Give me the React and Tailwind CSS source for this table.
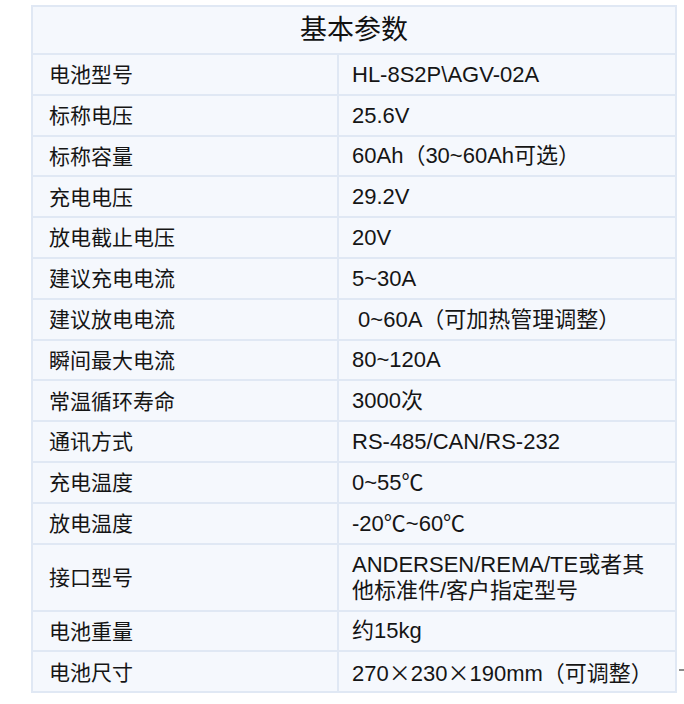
import React from "react";

const X = () => <span style={{ fontFamily: '"Noto Sans CJK SC", sans-serif' }}>×</span>;

const ROWS = [
  ["电池型号", "HL-8S2P\\AGV-02A"],
  ["标称电压", "25.6V"],
  ["标称容量", "60Ah（30~60Ah可选）"],
  ["充电电压", "29.2V"],
  ["放电截止电压", "20V"],
  ["建议充电电流", "5~30A"],
  ["建议放电电流", "\u00a00~60A（可加热管理调整）"],
  ["瞬间最大电流", "80~120A"],
  ["常温循环寿命", "3000次"],
  ["通讯方式", "RS-485/CAN/RS-232"],
  ["充电温度", "0~55℃"],
  ["放电温度", "-20℃~60℃"],
  ["接口型号", ["ANDERSEN/REMA/TE或者其", "他标准件/客户指定型号"]],
  ["电池重量", "约15kg"],
  ["电池尺寸", <>270<X />230<X />190mm（可调整）</>],
];

export default function App() {
  return (
    <div
      className="relative w-[684px] h-[704px] bg-white pt-[5px] pl-[31px]"
      style={{ fontFamily: '"Liberation Sans", "Noto Sans CJK SC", sans-serif' }}
    >
      <div className="w-[646px] border-2 border-[#e0e8f4] bg-[#f5f8fd] text-[#151515]">
        {/* Header */}
        <div className="h-[46px] flex items-center justify-center text-[27px] text-[#111] pt-[1px]">
          基本参数
        </div>

        {ROWS.map(([label, value]) => {
          const multi = Array.isArray(value);
          return (
            <div
              key={label}
              className={`flex border-t-2 border-[#e0e8f4] ${multi ? "h-[67px]" : "h-[40.8px]"}`}
            >
              <div className="w-[304px] shrink-0 flex items-center pl-[16px] pt-[1px] text-[21px]">
                {label}
              </div>
              <div className="flex-1 flex flex-col justify-center border-l-2 border-[#e0e8f4] pl-[13px] pt-[1px] text-[22px] leading-[26px]">
                {multi ? value.map((line) => <div key={line}>{line}</div>) : <div>{value}</div>}
              </div>
            </div>
          );
        })}
      </div>

      <div className="absolute left-[679px] top-[669px] w-[5px] h-[2px] bg-[#8a8a8a]" />
    </div>
  );
}
